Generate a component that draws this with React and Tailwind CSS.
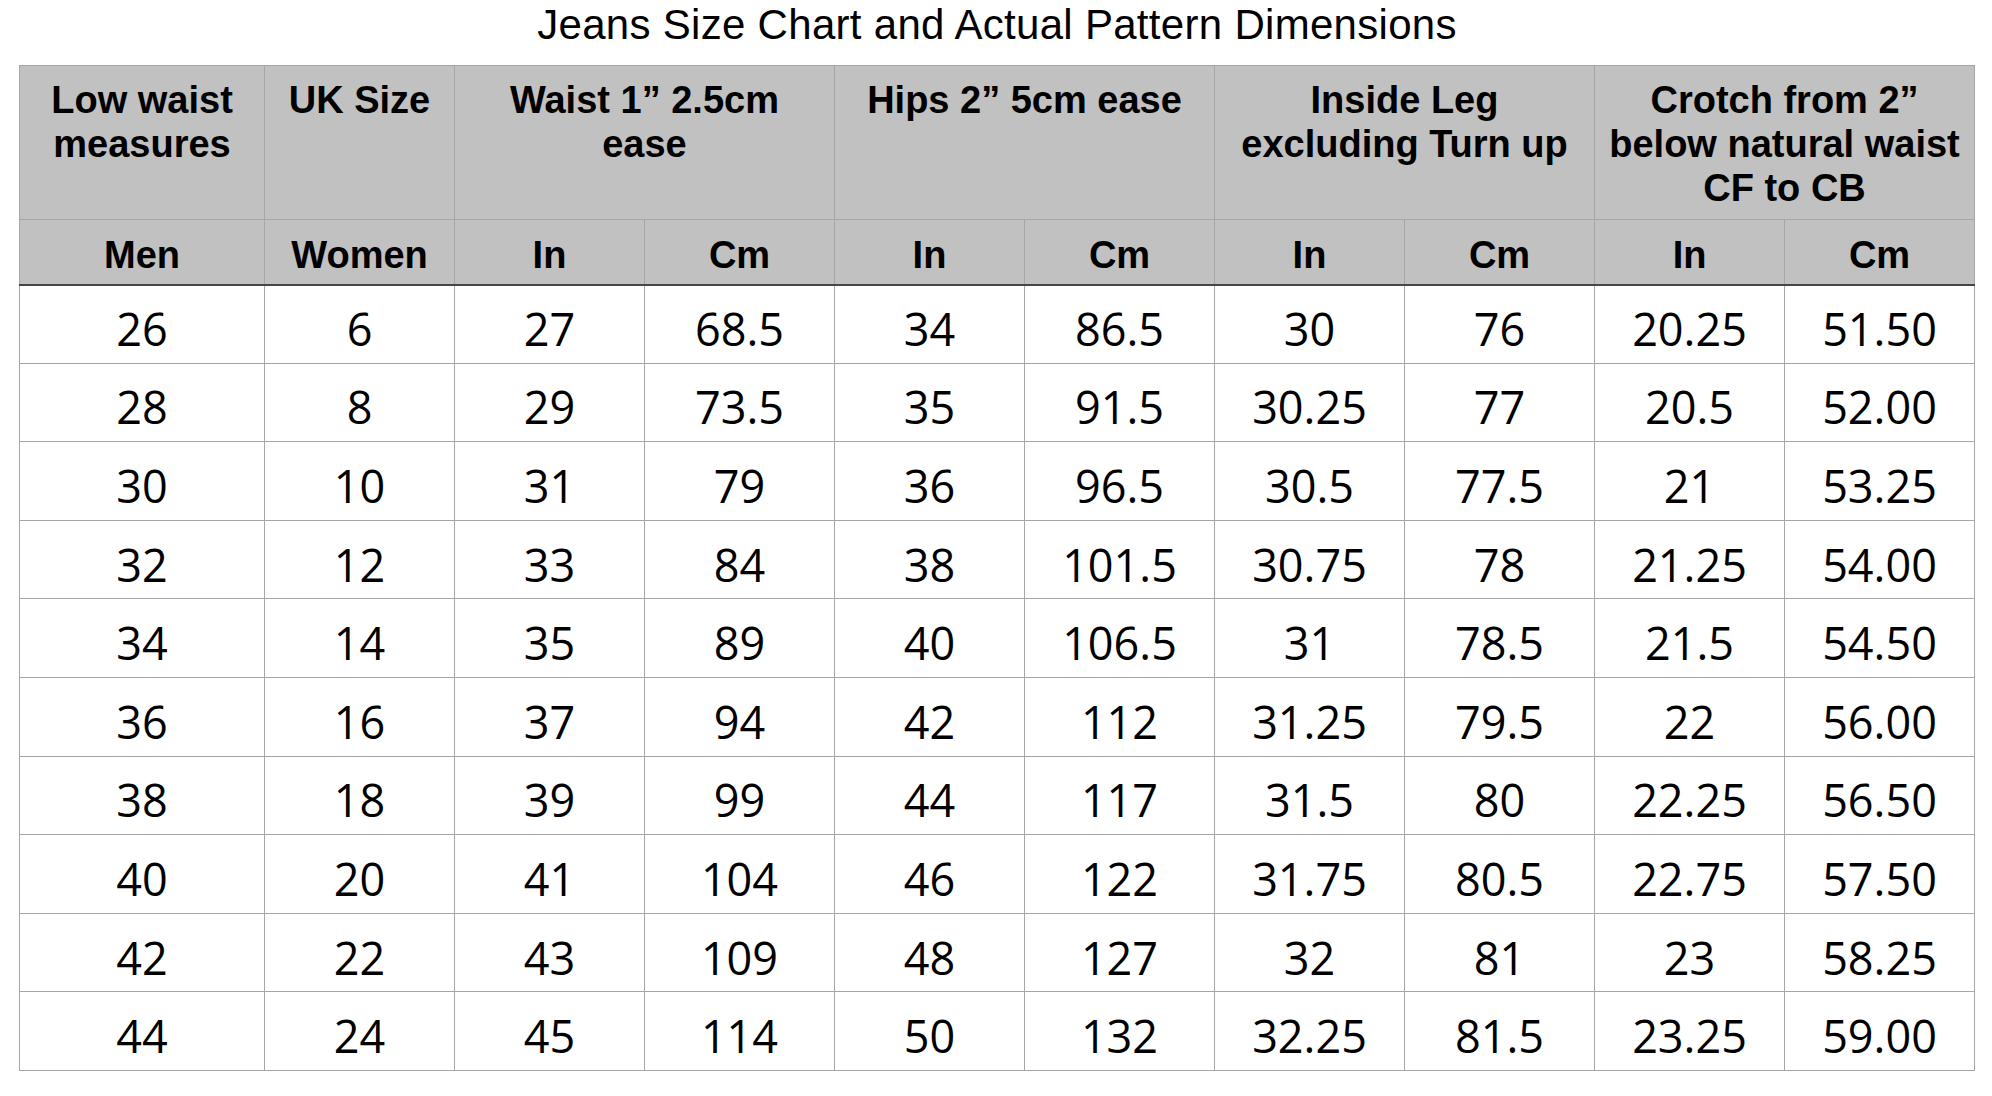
import React from 'react';

const rows = [
  ['26', '6', '27', '68.5', '34', '86.5', '30', '76', '20.25', '51.50'],
  ['28', '8', '29', '73.5', '35', '91.5', '30.25', '77', '20.5', '52.00'],
  ['30', '10', '31', '79', '36', '96.5', '30.5', '77.5', '21', '53.25'],
  ['32', '12', '33', '84', '38', '101.5', '30.75', '78', '21.25', '54.00'],
  ['34', '14', '35', '89', '40', '106.5', '31', '78.5', '21.5', '54.50'],
  ['36', '16', '37', '94', '42', '112', '31.25', '79.5', '22', '56.00'],
  ['38', '18', '39', '99', '44', '117', '31.5', '80', '22.25', '56.50'],
  ['40', '20', '41', '104', '46', '122', '31.75', '80.5', '22.75', '57.50'],
  ['42', '22', '43', '109', '48', '127', '32', '81', '23', '58.25'],
  ['44', '24', '45', '114', '50', '132', '32.25', '81.5', '23.25', '59.00'],
];

const groups = [
  { span: 1, lines: ['Low waist', 'measures'] },
  { span: 1, lines: ['UK Size'] },
  { span: 2, lines: ['Waist 1\u201d 2.5cm', 'ease'] },
  { span: 2, lines: ['Hips 2\u201d 5cm ease'] },
  { span: 2, lines: ['Inside Leg', 'excluding Turn up'] },
  { span: 2, lines: ['Crotch from 2\u201d', 'below natural waist', 'CF to CB'] },
];

const subHeads = ['Men', 'Women', 'In', 'Cm', 'In', 'Cm', 'In', 'Cm', 'In', 'Cm'];

export default function App() {
  return (
    <div className="min-h-screen bg-white pl-[19px] pr-[17px] pt-[3px]">
      <h1 className="h-[44px] text-center text-[42px] leading-[44px] tracking-[0.3px] font-normal text-black font-['Liberation_Sans',Arial,sans-serif]">
        Jeans Size Chart and Actual Pattern Dimensions
      </h1>

      <table className="mt-[18px] w-[1956px] table-fixed border-collapse text-black">
        <colgroup>
          <col className="w-[245px]" />
          <col className="w-[190px]" />
          {[...Array(8)].map((_, i) => (
            <col key={i} className="w-[190px]" />
          ))}
        </colgroup>
        <thead className="bg-[#c0c1c0] font-['Liberation_Sans',Arial,sans-serif] font-bold text-[38px] leading-[44px]">
          <tr className="h-[154px]">
            {groups.map((g, i) => (
              <th
                key={i}
                colSpan={g.span}
                className="border border-[#a6a6a6] px-1 pt-[12px] align-top text-center font-bold whitespace-nowrap"
              >
                {g.lines.map((l, j) => (
                  <div key={j}>{l}</div>
                ))}
              </th>
            ))}
          </tr>
          <tr className="h-[65px]">
            {subHeads.map((s, i) => (
              <th
                key={i}
                className="border border-[#a6a6a6] border-b-[2px] border-b-[#454545] pt-[7px] text-center align-middle font-bold"
              >
                {s}
              </th>
            ))}
          </tr>
        </thead>
        <tbody className="font-['Open_Sans',sans-serif] text-[45px] leading-[50px]">
          {rows.map((r, i) => (
            <tr key={i} className="h-[78.6px]">
              {r.map((c, j) => (
                <td key={j} className="border border-[#a6a6a6] pt-[10px] text-center align-middle">
                  {c}
                </td>
              ))}
            </tr>
          ))}
        </tbody>
      </table>
    </div>
  );
}
